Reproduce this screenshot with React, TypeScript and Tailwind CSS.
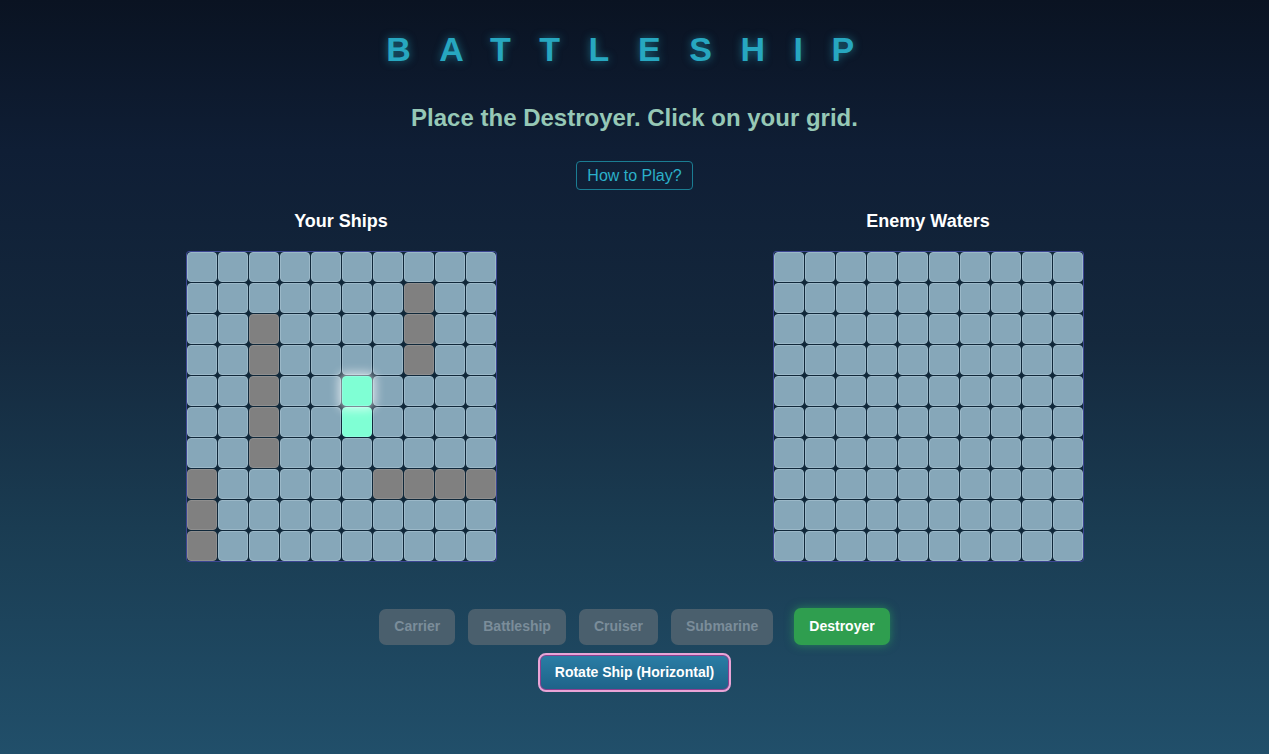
import React from "react";

const SIZE = 10;

// cells taken by ships already placed on the player grid
const placed = new Set<string>([
  "1-7", "2-7", "3-7",
  "2-2", "3-2", "4-2", "5-2", "6-2",
  "7-0", "8-0", "9-0",
  "7-6", "7-7", "7-8", "7-9",
]);

const preview = new Set<string>(["4-5", "5-5"]);

const ships = ["Carrier", "Battleship", "Cruiser", "Submarine", "Destroyer"];

const Board = ({ title, mine }: { title: string; mine?: boolean }) => {
  const cells = [];
  for (let r = 0; r < SIZE; r++) {
    for (let c = 0; c < SIZE; c++) {
      const key = `${r}-${c}`;
      let cls = "bg-[#86a7b9] border border-[#9bb8c8]";
      if (mine && placed.has(key)) cls = "bg-[#808080] border border-[#8e8e8e]";
      if (mine && preview.has(key)) cls = "bg-[#7fffd4] border border-[#8fffe0]";
      const glow = mine && key === "4-5" ? "shadow-[0_0_10px_4px_rgba(255,255,255,0.6)] relative z-10" : "";
      cells.push(<div key={key} className={`w-[30px] h-[30px] rounded-[4px] ${cls} ${glow}`} />);
    }
  }
  return (
    <div className="flex flex-col items-center">
      <h3 className="text-[18px] font-bold text-white mb-[19px] leading-[22px]">{title}</h3>
      <div className="grid grid-cols-[repeat(10,30px)] gap-px bg-[#10283a] border border-[#3c4592] rounded-[3px]">
        {cells}
      </div>
    </div>
  );
};

export default function App() {
  return (
    <div
      className="min-h-[754px] w-full flex flex-col items-center bg-[linear-gradient(180deg,#0a1322_0%,#0f1e35_20%,#14283d_45%,#1a3c52_70%,#214f6a_100%)]"
      style={{ fontFamily: '"Liberation Sans", Arial, sans-serif' }}
    >
      <h1 className="mt-[29px] text-[34px] leading-[40px] font-bold text-[#27a7c0] tracking-[0.84em] [text-shadow:0_0_8px_rgba(39,167,192,0.6)]">
        BATTLESHIP
      </h1>
      <p className="mt-[35px] text-[24px] leading-[28px] font-bold text-[#96c8b6]">
        Place the Destroyer. Click on your grid.
      </p>
      <button className="mt-[29px] px-[10px] h-[29px] border border-[#1b7d93] rounded-[4px] text-[16px] text-[#2bb0c9]">
        How to Play?
      </button>
      <div className="mt-[20px] flex gap-[276px]">
        <Board title="Your Ships" mine />
        <Board title="Enemy Waters" />
      </div>
      <div className="mt-[46px] flex items-center gap-[13px]">
        {ships.map((s) =>
          s === "Destroyer" ? (
            <button
              key={s}
              className="ml-[8px] h-[37px] px-[15px] rounded-[7px] bg-[#2f9e4f] text-white text-[14px] font-bold shadow-[0_0_10px_rgba(47,180,90,0.55)]"
            >
              {s}
            </button>
          ) : (
            <button
              key={s}
              className="h-[36px] px-[15px] rounded-[7px] bg-[#4a5f6d] text-[#7b8d9a] text-[14px] font-bold"
            >
              {s}
            </button>
          )
        )}
      </div>
      <button className="mt-[8px] h-[39px] px-[15px] rounded-[8px] border-2 border-[#e9a4d6] shadow-[inset_0_0_0_1px_#8a3f8f] bg-[linear-gradient(180deg,#2a7ea6,#1e6288)] text-white text-[14px] font-bold">
        Rotate Ship (Horizontal)
      </button>
    </div>
  );
}
